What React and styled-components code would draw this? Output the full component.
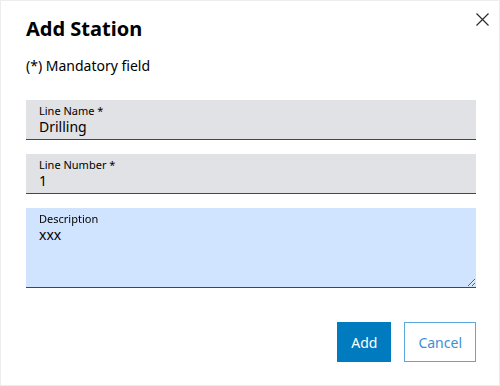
import React, { useEffect, useRef } from "react";
import styled, { createGlobalStyle } from "styled-components";

const Global = createGlobalStyle`
  html, body { margin: 0; padding: 0; background: #fff; }
  * { box-sizing: border-box; }
  body { font-family: "Noto Sans", "Open Sans", Arial, sans-serif; color: #000; }
`;

const Dialog = styled.div`
  position: relative;
  width: 500px;
  height: 386px;
  border: 1px solid #ededed;
  background: #fff;
  padding: 14px 23px 0 25px;
  display: flex;
  flex-direction: column;
`;

const Title = styled.h1`
  margin: 0;
  font-size: 20px;
  line-height: 28px;
  font-weight: 700;
  color: #000;
`;

const Note = styled.p`
  margin: 13px 0 0;
  font-size: 14px;
  line-height: 20px;
  color: #000;
`;

const CloseButton = styled.button`
  position: absolute;
  top: 10px;
  right: 8px;
  width: 17px;
  height: 17px;
  padding: 2px;
  border: 0;
  background: transparent;
  display: flex;
  align-items: center;
  justify-content: center;
  cursor: pointer;
`;

const Form = styled.form`
  margin-top: 24px;
  display: flex;
  flex-direction: column;
  gap: 14px;
`;

const Field = styled.div`
  position: relative;
  height: 40px;
  background: #e0e2e5;
  border-bottom: 1px solid #43464a;
  padding: 4px 12px 0 13px;
  display: flex;
  flex-direction: column;
`;

const Label = styled.label`
  font-size: 11px;
  line-height: 14px;
  color: #000;
`;

const FloatingLabel = styled(Label)`
  position: absolute;
  top: 4px;
  left: 13px;
  pointer-events: none;
`;

const Input = styled.input`
  border: 0;
  outline: none;
  background: transparent;
  padding: 0;
  margin: 0;
  font-family: inherit;
  font-size: 14px;
  line-height: 18px;
  height: 18px;
  color: #000;
`;

const AreaWrap = styled.div`
  position: relative;
  height: 80px;
`;

const TextArea = styled.textarea`
  display: block;
  width: 100%;
  height: 80px;
  margin: 0;
  resize: vertical;
  border: 0;
  border-bottom: 1px solid #43464a;
  outline: none;
  background: #d1e4ff;
  padding: 18px 12px 4px 13px;
  font-family: inherit;
  font-size: 14px;
  line-height: 18px;
  color: #000;
  caret-color: #000;
`;

const Actions = styled.div`
  margin-top: 34px;
  display: flex;
  justify-content: flex-end;
  gap: 13px;
`;

const Button = styled.button`
  height: 40px;
  padding: 0 13px;
  font-family: inherit;
  font-size: 14px;
  border: 1px solid ${(p) => (p.$primary ? "#007bc0" : "#5ba8de")};
  background: ${(p) => (p.$primary ? "#007bc0" : "#fff")};
  color: ${(p) => (p.$primary ? "#fff" : "#3d8fd3")};
  cursor: pointer;
`;

export default function App() {
  const ref = useRef(null);
  useEffect(() => {
    if (ref.current) {
      ref.current.focus();
      ref.current.setSelectionRange(3, 3);
    }
  }, []);
  return (
    <>
      <Global />
      <Dialog>
        <CloseButton aria-label="Close">
          <svg width="13" height="13" viewBox="0 0 13 13">
            <path d="M0.5 0.5 L12.5 12.5 M12.5 0.5 L0.5 12.5" stroke="#2b2b2b" strokeWidth="1.2" fill="none" />
          </svg>
        </CloseButton>
        <Title>Add Station</Title>
        <Note>(*) Mandatory field</Note>
        <Form onSubmit={(e) => e.preventDefault()}>
          <Field>
            <Label htmlFor="ln">Line Name *</Label>
            <Input id="ln" defaultValue="Drilling" />
          </Field>
          <Field>
            <Label htmlFor="lnum">Line Number *</Label>
            <Input id="lnum" defaultValue="1" />
          </Field>
          <AreaWrap>
            <FloatingLabel htmlFor="desc">Description</FloatingLabel>
            <TextArea id="desc" ref={ref} defaultValue="xxx" />
          </AreaWrap>
        </Form>
        <Actions>
          <Button $primary>Add</Button>
          <Button>Cancel</Button>
        </Actions>
      </Dialog>
    </>
  );
}
